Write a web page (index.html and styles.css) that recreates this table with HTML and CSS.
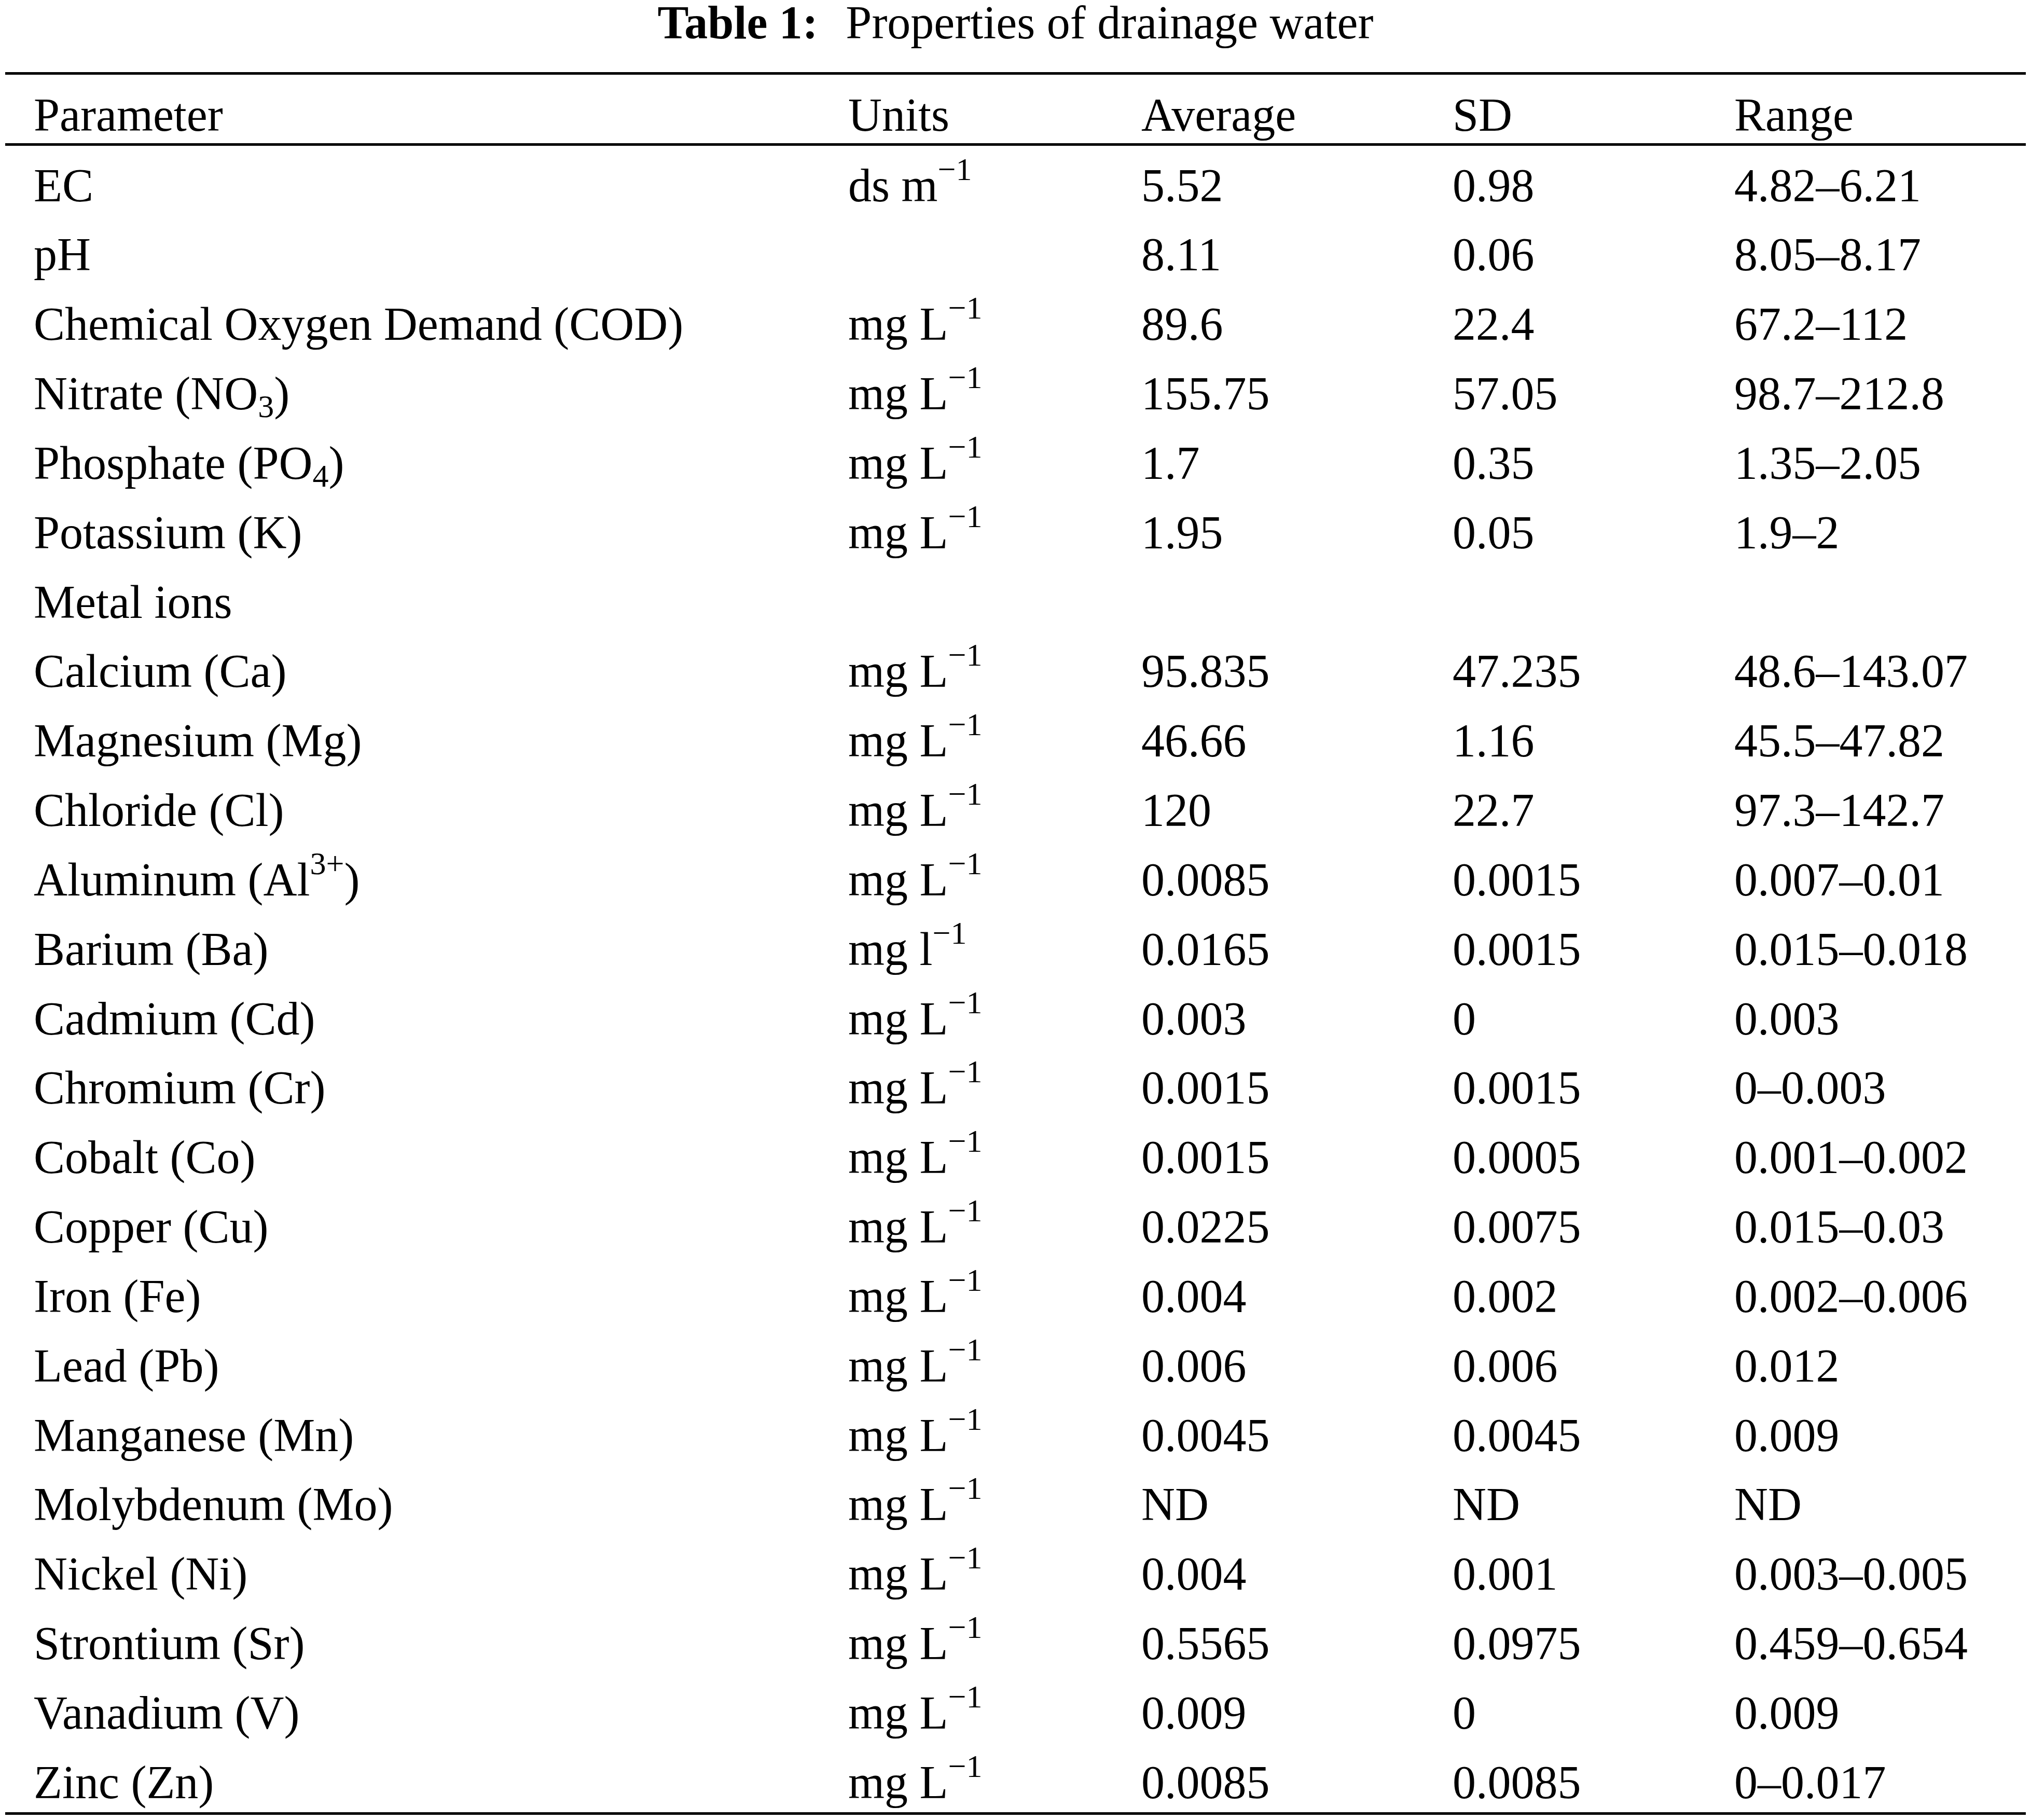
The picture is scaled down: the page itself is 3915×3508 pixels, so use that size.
FILE: index.html
```html
<!DOCTYPE html>
<html lang="en">
<head>
<meta charset="utf-8">
<title>Table 1: Properties of drainage water</title>
<link rel="stylesheet" href="styles.css">
</head>
<body>
<div class="page">
  <div class="caption"><b class="label">Table 1:</b> Properties of drainage water</div>
  <div class="table">
    <div class="row head"><span>Parameter</span><span>Units</span><span>Average</span><span>SD</span><span>Range</span></div>
    <div class="row"><span>EC</span><span>ds m<sup>−1</sup></span><span>5.52</span><span>0.98</span><span>4.82–6.21</span></div>
    <div class="row"><span>pH</span><span></span><span>8.11</span><span>0.06</span><span>8.05–8.17</span></div>
    <div class="row"><span>Chemical Oxygen Demand (COD)</span><span>mg L<sup>−1</sup></span><span>89.6</span><span>22.4</span><span>67.2–112</span></div>
    <div class="row"><span>Nitrate (NO<sub>3</sub>)</span><span>mg L<sup>−1</sup></span><span>155.75</span><span>57.05</span><span>98.7–212.8</span></div>
    <div class="row"><span>Phosphate (PO<sub>4</sub>)</span><span>mg L<sup>−1</sup></span><span>1.7</span><span>0.35</span><span>1.35–2.05</span></div>
    <div class="row"><span>Potassium (K)</span><span>mg L<sup>−1</sup></span><span>1.95</span><span>0.05</span><span>1.9–2</span></div>
    <div class="row"><span>Metal ions</span><span></span><span></span><span></span><span></span></div>
    <div class="row"><span>Calcium (Ca)</span><span>mg L<sup>−1</sup></span><span>95.835</span><span>47.235</span><span>48.6–143.07</span></div>
    <div class="row"><span>Magnesium (Mg)</span><span>mg L<sup>−1</sup></span><span>46.66</span><span>1.16</span><span>45.5–47.82</span></div>
    <div class="row"><span>Chloride (Cl)</span><span>mg L<sup>−1</sup></span><span>120</span><span>22.7</span><span>97.3–142.7</span></div>
    <div class="row"><span>Aluminum (Al<sup>3+</sup>)</span><span>mg L<sup>−1</sup></span><span>0.0085</span><span>0.0015</span><span>0.007–0.01</span></div>
    <div class="row"><span>Barium (Ba)</span><span>mg l<sup>−1</sup></span><span>0.0165</span><span>0.0015</span><span>0.015–0.018</span></div>
    <div class="row"><span>Cadmium (Cd)</span><span>mg L<sup>−1</sup></span><span>0.003</span><span>0</span><span>0.003</span></div>
    <div class="row"><span>Chromium (Cr)</span><span>mg L<sup>−1</sup></span><span>0.0015</span><span>0.0015</span><span>0–0.003</span></div>
    <div class="row"><span>Cobalt (Co)</span><span>mg L<sup>−1</sup></span><span>0.0015</span><span>0.0005</span><span>0.001–0.002</span></div>
    <div class="row"><span>Copper (Cu)</span><span>mg L<sup>−1</sup></span><span>0.0225</span><span>0.0075</span><span>0.015–0.03</span></div>
    <div class="row"><span>Iron (Fe)</span><span>mg L<sup>−1</sup></span><span>0.004</span><span>0.002</span><span>0.002–0.006</span></div>
    <div class="row"><span>Lead (Pb)</span><span>mg L<sup>−1</sup></span><span>0.006</span><span>0.006</span><span>0.012</span></div>
    <div class="row"><span>Manganese (Mn)</span><span>mg L<sup>−1</sup></span><span>0.0045</span><span>0.0045</span><span>0.009</span></div>
    <div class="row"><span>Molybdenum (Mo)</span><span>mg L<sup>−1</sup></span><span>ND</span><span>ND</span><span>ND</span></div>
    <div class="row"><span>Nickel (Ni)</span><span>mg L<sup>−1</sup></span><span>0.004</span><span>0.001</span><span>0.003–0.005</span></div>
    <div class="row"><span>Strontium (Sr)</span><span>mg L<sup>−1</sup></span><span>0.5565</span><span>0.0975</span><span>0.459–0.654</span></div>
    <div class="row"><span>Vanadium (V)</span><span>mg L<sup>−1</sup></span><span>0.009</span><span>0</span><span>0.009</span></div>
    <div class="row"><span>Zinc (Zn)</span><span>mg L<sup>−1</sup></span><span>0.0085</span><span>0.0085</span><span>0–0.017</span></div>
  </div>
</div>
</body>
</html>
```

FILE: styles.css
```css
html, body {
  margin: 0;
  padding: 0;
  background: #ffffff;
}

body {
  color: #000000;
  font-family: "Liberation Serif", "Times New Roman", serif;
  font-size: 90px;
}

.page {
  padding: 0 10px;
}

.caption {
  text-align: center;
  line-height: 88px;
  height: 88px;
  margin: 0 0 51px;
  white-space: nowrap;
}

.caption .label {
  font-weight: bold;
  margin-right: 31px;
}

.table {
  border-top: 5px solid #000000;
  border-bottom: 5px solid #000000;
}

.row {
  display: grid;
  grid-template-columns: 1570px 565px 600px 543px 1fr;
  box-sizing: border-box;
  height: 133.83px;
  padding: 26.6px 0 0 55px;
  line-height: 100px;
  white-space: nowrap;
}

.row.head {
  height: 137px;
  padding-top: 27.6px;
  border-bottom: 5px solid #000000;
}

sup {
  font-size: 62px;
  line-height: 0;
  vertical-align: 41px;
}

sub {
  font-size: 62px;
  line-height: 0;
  vertical-align: -15px;
}
```
